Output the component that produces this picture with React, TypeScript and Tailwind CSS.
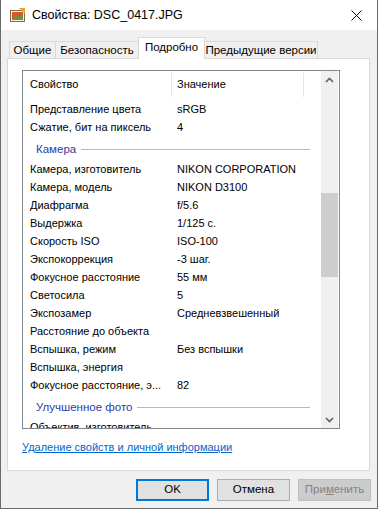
import React from 'react';

type Row =
  | { kind: 'row'; name: string; value?: string }
  | { kind: 'group'; title: string };

const rows: Row[] = [
  { kind: 'row', name: 'Представление цвета', value: 'sRGB' },
  { kind: 'row', name: 'Сжатие, бит на пиксель', value: '4' },
  { kind: 'group', title: 'Камера' },
  { kind: 'row', name: 'Камера, изготовитель', value: 'NIKON CORPORATION' },
  { kind: 'row', name: 'Камера, модель', value: 'NIKON D3100' },
  { kind: 'row', name: 'Диафрагма', value: 'f/5.6' },
  { kind: 'row', name: 'Выдержка', value: '1/125 с.' },
  { kind: 'row', name: 'Скорость ISO', value: 'ISO-100' },
  { kind: 'row', name: 'Экспокоррекция', value: '-3 шаг.' },
  { kind: 'row', name: 'Фокусное расстояние', value: '55 мм' },
  { kind: 'row', name: 'Светосила', value: '5' },
  { kind: 'row', name: 'Экспозамер', value: 'Средневзвешенный' },
  { kind: 'row', name: 'Расстояние до объекта' },
  { kind: 'row', name: 'Вспышка, режим', value: 'Без вспышки' },
  { kind: 'row', name: 'Вспышка, энергия' },
  { kind: 'row', name: 'Фокусное расстояние, э...', value: '82' },
  { kind: 'group', title: 'Улучшенное фото' },
  { kind: 'row', name: 'Объектив, изготовитель' },
];

const tabs = [
  { label: 'Общие', width: 'w-[47px]' },
  { label: 'Безопасность', width: 'w-[84px]' },
  { label: 'Подробно', width: 'w-[67px]', active: true },
  { label: 'Предыдущие версии', width: 'w-[114px]' },
];

const Chevron: React.FC<{ down?: boolean }> = ({ down }) => (
  <svg width="9" height="6" viewBox="0 0 9 6">
    <polyline
      points={down ? '1,1 4.5,4.5 8,1' : '1,5 4.5,1.5 8,5'}
      fill="none"
      stroke="#606060"
      strokeWidth="1.6"
    />
  </svg>
);

export default function App() {
  return (
    <div
      className="w-[378px] h-[509px] flex flex-col border-x border-b border-[#6a6a6a] bg-[#f0f0f0] text-[11px] text-black"
      style={{ fontFamily: '"Liberation Sans", Arial, sans-serif' }}
    >
      {/* Title bar */}
      <div className="h-[30px] bg-white flex items-center shrink-0">
        <svg className="ml-[9px]" width="16" height="15" viewBox="0 0 16 15">
          <rect x="0.5" y="2.5" width="14" height="11" fill="#f4efe6" stroke="#8a6a4a" />
          <rect x="2" y="4" width="11" height="8" fill="#d9552b" />
          <polygon points="2,12 6,7 9,10 13,6 13,12" fill="#5e9e3a" />
          <polygon points="9,0 15,0 15,6" fill="#e8a33a" />
        </svg>
        <span className="ml-[6px] text-[12.5px]">Свойства: DSC_0417.JPG</span>
        <svg className="ml-auto mr-[15px]" width="11" height="11" viewBox="0 0 11 11">
          <path d="M0.5 0.5 L10.5 10.5 M10.5 0.5 L0.5 10.5" stroke="#111" strokeWidth="1" />
        </svg>
      </div>

      {/* Body */}
      <div className="flex-1 flex flex-col pt-[7px] pl-[6px] pr-[6px] pb-[7px]">
        {/* Tabs */}
        <div className="h-[21px] flex items-end pl-[2px] text-[11.5px]">
          {tabs.map((t, i) =>
            t.active ? (
              <div
                key={t.label}
                className={`${t.width} h-[22px] -mb-px -ml-px relative z-10 bg-white border-x border-t border-[#d9d9d9] flex items-center justify-center pb-[1px]`}
              >
                {t.label}
              </div>
            ) : (
              <div
                key={t.label}
                className={`${t.width} h-[17px] ${i > 0 ? '-ml-px' : ''} bg-[#f0f0f0] border-x border-t border-[#d9d9d9] flex items-center justify-center pt-[1px]`}
              >
                {t.label}
              </div>
            )
          )}
        </div>

        {/* Tab panel */}
        <div className="w-[363px] h-[413px] bg-white border border-[#d9d9d9] flex flex-col">
          {/* List box */}
          <div className="mt-[11px] ml-[14px] w-[318px] h-[359px] border border-[#828790] flex overflow-hidden">
            <div className="flex-1 flex flex-col overflow-hidden">
              {/* Header */}
              <div className="h-[28px] shrink-0 flex items-center pb-[1px]">
                <div className="w-[148px] pl-[7px]">Свойство</div>
                <div className="w-px h-[24px] bg-[#e5e5e5]" />
                <div className="w-[131px] pl-[5px]">Значение</div>
                <div className="w-px h-[24px] bg-[#e5e5e5]" />
              </div>

              {rows.map((r, i) =>
                r.kind === 'group' ? (
                  <div key={i} className="h-[24px] shrink-0 flex items-center pt-[5px] pl-[13px] pr-[11px]">
                    <span className="text-[#2b3ca6] text-[11.5px]">{r.title}</span>
                    <div className="flex-1 h-px ml-[5px] bg-[#a9b8e6]" />
                  </div>
                ) : (
                  <div key={i} className="h-[18px] shrink-0 flex items-start pt-[3px] leading-[14px]">
                    <div className="w-[149px] pl-[7px] whitespace-nowrap overflow-hidden">{r.name}</div>
                    <div className="pl-[5px] whitespace-nowrap">{r.value}</div>
                  </div>
                )
              )}
            </div>

            {/* Scrollbar */}
            <div className="w-[17px] shrink-0 mr-px bg-[#f0f0f0] flex flex-col">
              <div className="h-[17px] flex items-center justify-center">
                <Chevron />
              </div>
              <div className="flex-1">
                <div className="mt-[105px] h-[84px] bg-[#cdcdcd]" />
              </div>
              <div className="h-[17px] flex items-center justify-center">
                <Chevron down />
              </div>
            </div>
          </div>

          <a className="mt-[10px] ml-[14px] self-start text-[#0066cc] underline leading-[16px]">
            Удаление свойств и личной информации
          </a>
        </div>

        {/* Buttons */}
        <div className="mt-[8px] flex justify-end gap-[8px] text-[11.5px]">
          <button className="w-[73px] h-[22px] border-2 border-[#0078d7] bg-[#e1e1e1] flex items-center justify-center">
            OK
          </button>
          <button className="w-[73px] h-[22px] border border-[#adadad] bg-[#e1e1e1] flex items-center justify-center">
            Отмена
          </button>
          <button className="w-[73px] h-[22px] border border-[#bfbfbf] bg-[#cccccc] text-[#838383] flex items-center justify-center">
            При<span className="underline">м</span>енить
          </button>
        </div>
      </div>
    </div>
  );
}
